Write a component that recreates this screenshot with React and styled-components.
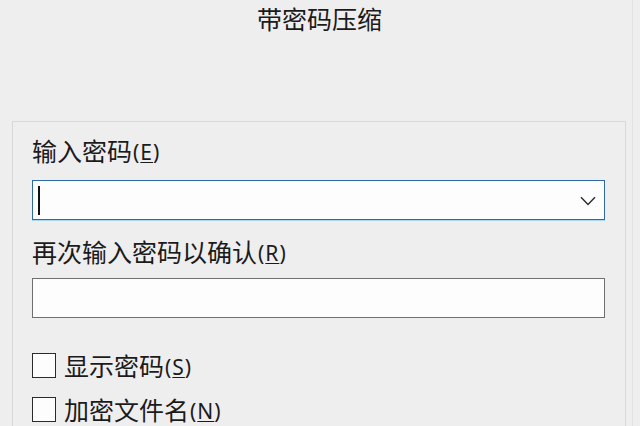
import React from "react";
import styled, { createGlobalStyle } from "styled-components";

const GlobalStyle = createGlobalStyle`
	html, body {
		margin: 0;
		padding: 0;
		background: #efeeef;
		overflow: hidden;
	}
	body {
		font-family: "Noto Sans CJK SC", "Noto Sans", sans-serif;
		color: #1b1b1b;
	}
`;

function Mnemonic({ letter }) {
	return (
		<Key>
			(<u>{letter}</u>)
		</Key>
	);
}

function App() {
	return (
		<>
			<GlobalStyle />
			<Window>
				<Title>带密码压缩</Title>
				<Group>
					<Label>
						输入密码
						<Mnemonic letter="E" />
					</Label>
					<Field focused>
						<Caret />
						<Chevron width="16" height="10" viewBox="0 0 16 10">
							<path d="M1 1.2 L8 8.4 L15 1.2" fill="none" stroke="#2b2b2b" strokeWidth="1.4" />
						</Chevron>
					</Field>

					<Label spaced>
						再次输入密码以确认
						<Mnemonic letter="R" />
					</Label>
					<Field />

					<Options>
						<Option>
							<Box />
							显示密码
							<Mnemonic letter="S" />
						</Option>
						<Option>
							<Box />
							加密文件名
							<Mnemonic letter="N" />
						</Option>
					</Options>
				</Group>
			</Window>
		</>
	);
}

export default App;

const Window = styled.div`
	width: 633px;
	height: 426px;
	border-right: 1px solid #e3e2e3;
	display: flex;
	flex-direction: column;
	box-sizing: border-box;
`;

const Title = styled.div`
	font-size: 25px;
	line-height: 36px;
	text-align: center;
	padding: 0 0 0 7px;
	height: 121px;
	box-sizing: border-box;
`;

const Group = styled.div`
	margin: 0 6px 0 12px;
	flex: 1;
	border: 1px solid #d9d8d9;
	border-bottom: none;
	padding: 13px 20px 0 19px;
	display: flex;
	flex-direction: column;
`;

const Label = styled.div`
	font-size: 25px;
	line-height: 30px;
	height: 30px;
	margin-top: ${(p) => (p.spaced ? "16px" : "0")};
	margin-bottom: ${(p) => (p.spaced ? "12px" : "15px")};
	display: flex;
	align-items: center;
	white-space: nowrap;
`;

const Key = styled.span`
	font-family: "Noto Sans", sans-serif;
	font-size: 21px;
	letter-spacing: 1px;
	margin-left: 1px;
	margin-top: 3px;

	u {
		text-underline-offset: 2px;
		text-decoration-thickness: 1px;
	}
`;

const Field = styled.div`
	height: 40px;
	box-sizing: border-box;
	background: #fdfdfd;
	border: 1px solid ${(p) => (p.focused ? "#2d6aa3" : "#6f6f6f")};
	box-shadow: ${(p) => (p.focused ? "0 1px 0 #a9d6f0" : "none")};
	display: flex;
	align-items: center;
	justify-content: space-between;
	padding: 0 8px 0 5px;
`;

const Caret = styled.span`
	width: 1.5px;
	height: 29px;
	background: #111;
`;

const Chevron = styled.svg`
	display: block;
	margin-top: 2px;
`;

const Options = styled.div`
	margin-top: 32px;
	display: flex;
	flex-direction: column;
	gap: 14px;
`;

const Option = styled.div`
	display: flex;
	align-items: center;
	font-size: 25px;
	line-height: 30px;
	height: 30px;
	white-space: nowrap;
`;

const Box = styled.span`
	width: 24px;
	height: 25px;
	box-sizing: border-box;
	border: 1.5px solid #2a2a2a;
	background: #fdfdfd;
	margin-right: 8px;
	flex-shrink: 0;
`;
